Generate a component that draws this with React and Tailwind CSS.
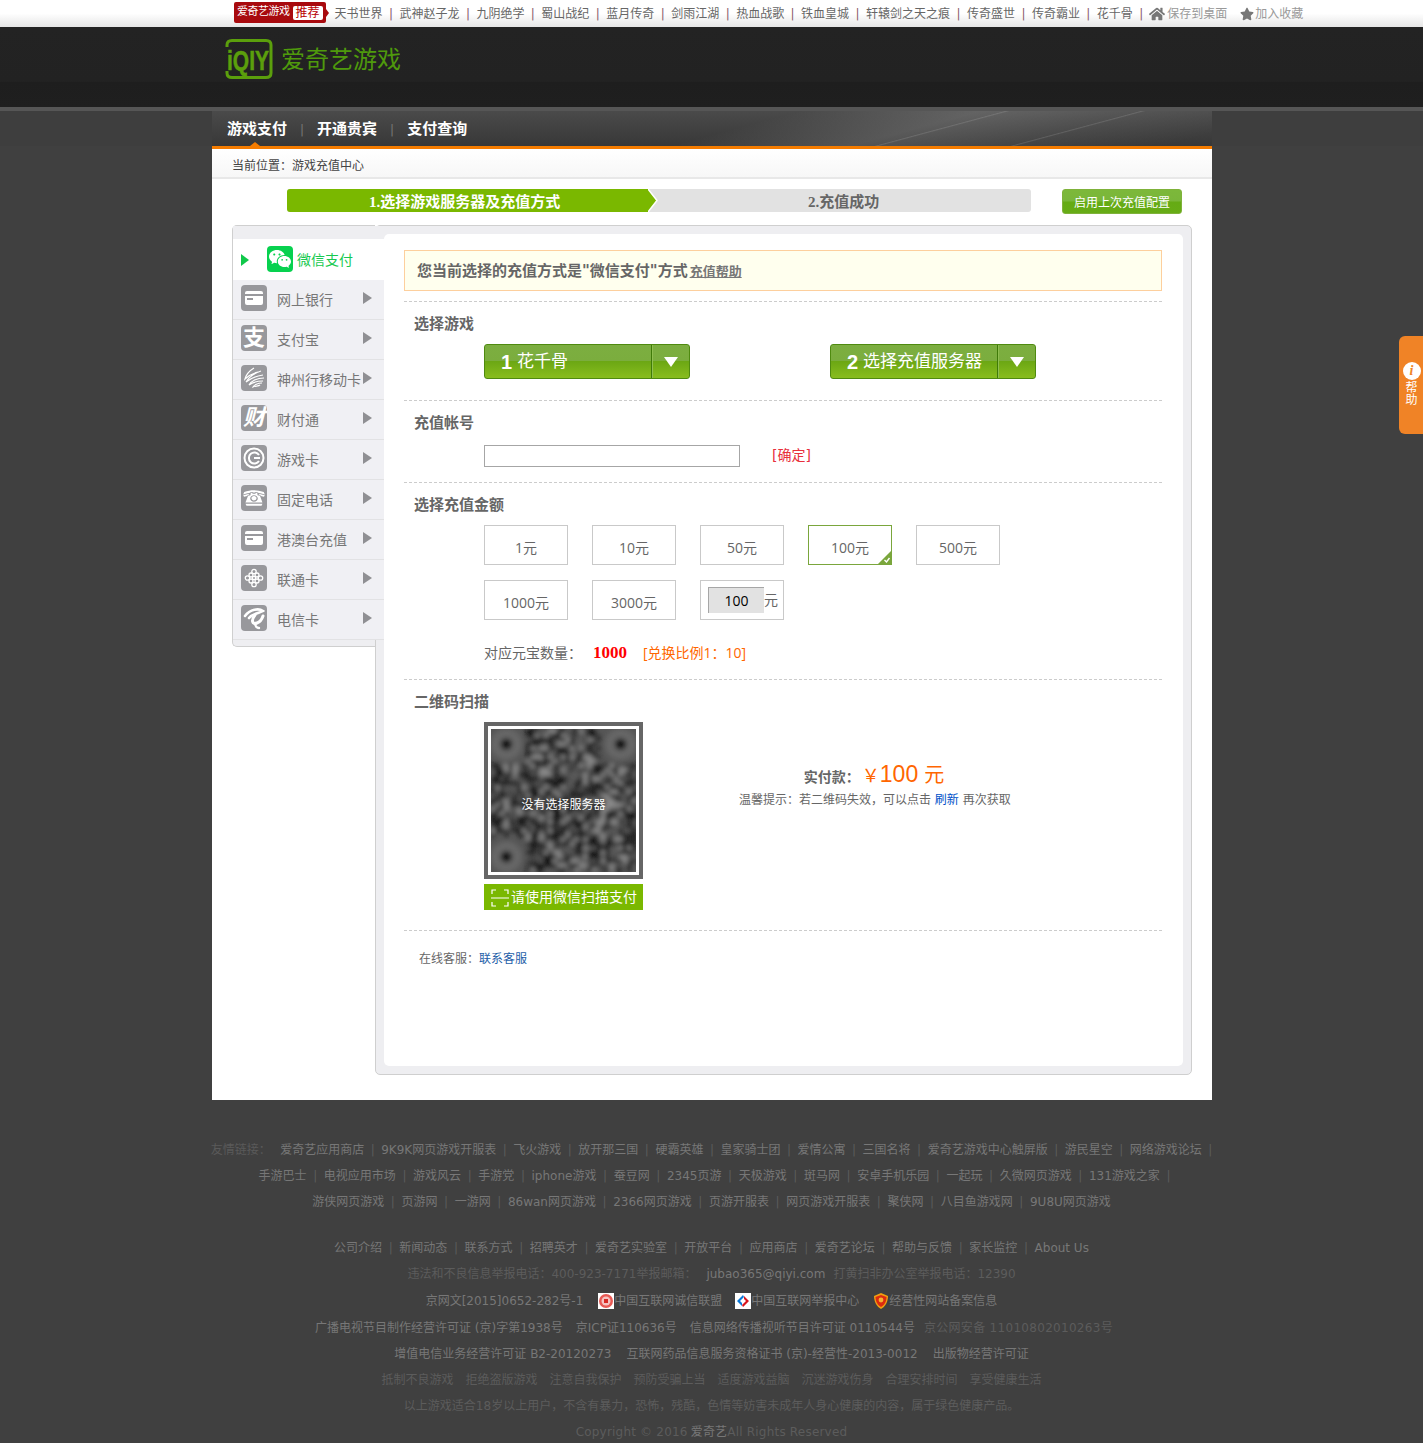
import { RiWechatFill } from "react-icons/ri";
import { GiRotaryPhone } from "react-icons/gi";
import { FaHome, FaStar } from "react-icons/fa";

const topLinks = ["天书世界", "武神赵子龙", "九阴绝学", "蜀山战纪", "蓝月传奇", "剑雨江湖", "热血战歌", "铁血皇城", "轩辕剑之天之痕", "传奇盛世", "传奇霸业", "花千骨"];
const friendRows = [
  ["爱奇艺应用商店", "9K9K网页游戏开服表", "飞火游戏", "放开那三国", "硬霸英雄", "皇家骑士团", "爱情公寓", "三国名将", "爱奇艺游戏中心触屏版", "游民星空", "网络游戏论坛"],
  ["手游巴士", "电视应用市场", "游戏风云", "手游党", "iphone游戏", "蚕豆网", "2345页游", "天极游戏", "斑马网", "安卓手机乐园", "一起玩", "久微网页游戏", "131游戏之家"],
  ["游侠网页游戏", "页游网", "一游网", "86wan网页游戏", "2366网页游戏", "页游开服表", "网页游戏开服表", "聚侠网", "八目鱼游戏网", "9U8U网页游戏"],
];
const aboutLinks = ["公司介绍", "新闻动态", "联系方式", "招聘英才", "爱奇艺实验室", "开放平台", "应用商店", "爱奇艺论坛", "帮助与反馈", "家长监控", "About Us"];

const CardIcon = () => (
  <svg viewBox="0 0 26 26" className="w-[26px] h-[26px]">
    <rect x="4" y="6" width="18" height="14" rx="2" fill="#fff" />
    <rect x="4" y="9" width="18" height="2" fill="#98989c" />
    <rect x="6" y="13" width="6" height="2" fill="#98989c" />
  </svg>
);
const MobileIcon = () => (
  <svg viewBox="0 0 26 26" className="w-[26px] h-[26px]" fill="none" stroke="#fff" strokeWidth="1.2">
    <path d="M13 3 C8 6 5 10 4 14 C8 10 13 8 17 7 M20 6 C14 8 8 12 5 17 C10 13 16 11 22 10 M23 13 C16 13 10 16 8 20 C12 17 18 16 22 16 M21 18 C17 18 13 20 12 22 C15 21 18 21 19 20" />
  </svg>
);
const GameIcon = () => (
  <svg viewBox="0 0 26 26" className="w-[26px] h-[26px]" fill="none" stroke="#fff" strokeWidth="2">
    <circle cx="13" cy="13" r="9.5" />
    <path d="M18 10 A5.5 5.5 0 1 0 18 16 M13 13 H19" />
  </svg>
);
const UnicomIcon = () => (
  <svg viewBox="0 0 26 26" className="w-[26px] h-[26px]" fill="none" stroke="#fff" strokeWidth="1.3">
    <circle cx="13" cy="6.5" r="2.2" />
    <circle cx="13" cy="19.5" r="2.2" />
    <circle cx="6.5" cy="13" r="2.2" />
    <circle cx="19.5" cy="13" r="2.2" />
    <circle cx="10" cy="10" r="2" />
    <circle cx="16" cy="10" r="2" />
    <circle cx="10" cy="16" r="2" />
    <circle cx="16" cy="16" r="2" />
    <circle cx="13" cy="13" r="1.6" />
  </svg>
);
const TelecomIcon = () => (
  <svg viewBox="0 0 26 26" className="w-[26px] h-[26px]" fill="none" stroke="#fff" strokeLinecap="round">
    <path d="M4 11 C9 4 18 3 22 6 C19 8 12 8 8 13" strokeWidth="2.6" />
    <path d="M14 10 C10 15 11 20 16 18 C19 17 21 14 22 11" strokeWidth="3" />
    <path d="M14 18 C14 21 16 23 18 23" strokeWidth="2.4" />
  </svg>
);
const GlyphIcon = ({ children, italic }) => (
  <span className={`text-white text-[22px] font-bold leading-none ${italic ? "italic" : ""}`}>{children}</span>
);

const payMethods = [
  { name: "网上银行", icon: <CardIcon /> },
  { name: "支付宝", icon: <GlyphIcon>支</GlyphIcon> },
  { name: "神州行移动卡", icon: <MobileIcon /> },
  { name: "财付通", icon: <GlyphIcon italic>财</GlyphIcon> },
  { name: "游戏卡", icon: <GameIcon /> },
  { name: "固定电话", icon: <GiRotaryPhone className="text-white w-[24px] h-[24px]" /> },
  { name: "港澳台充值", icon: <CardIcon /> },
  { name: "联通卡", icon: <UnicomIcon /> },
  { name: "电信卡", icon: <TelecomIcon /> },
];

// deterministic noise for the blurred qr image
const qrCells = [];
let seed = 29;
for (let y = 0; y < 33; y++) {
  for (let x = 0; x < 33; x++) {
    seed = (seed * 1103515245 + 12345) % 2147483648;
    const inFinder = (x < 8 && y < 8) || (x > 24 && y < 8) || (x < 8 && y > 24);
    if (!inFinder) qrCells.push({ x, y, v: (seed >> 14) % 5 });
  }
}
const qrColor = (v) => (v < 2 ? "#101010" : v === 2 ? "#8f8f8f" : v === 3 ? "#3c3c3c" : "#5a5a5a");

const BlurredQr = () => (
  <svg viewBox="0 0 33 33" preserveAspectRatio="none" className="w-full h-full block">
    <defs>
      <filter id="qrBlur" x="-5%" y="-5%" width="110%" height="110%">
        <feGaussianBlur stdDeviation="0.6" />
      </filter>
    </defs>
    <rect width="33" height="33" fill="#555" />
    <g filter="url(#qrBlur)">
      {qrCells.map((c) => (
        <rect key={c.x + "-" + c.y} x={c.x} y={c.y} width="1" height="1" fill={qrColor(c.v)} />
      ))}
      {[[3.5, 3.5], [29.5, 3.5], [3.5, 29.5]].map(([cx, cy]) => (
        <g key={cx + "" + cy}>
          <circle cx={cx} cy={cy} r="3.6" fill="#666" />
          <circle cx={cx} cy={cy} r="1.3" fill="#0a0a0a" />
        </g>
      ))}
    </g>
  </svg>
);

const Logo = () => (
  <svg viewBox="0 0 48 40" className="w-[48px] h-[40px]">
    <path d="M2 8 V6 Q2 1.5 7 1.5 H41 Q46 1.5 46 6 V34 Q46 38.5 41 38.5 H7 Q2 38.5 2 34 V32" fill="none" stroke="#5b9f0c" strokeWidth="3" />
    <text x="23" y="22.6" transform="scale(1 1.35)" textAnchor="middle" fontSize="21" fontWeight="700" fill="#5b9f0c" stroke="#5b9f0c" strokeWidth="0.4" fontFamily="Liberation Sans, sans-serif">iQIY</text>
  </svg>
);

const Sep = ({ className = "text-[#5c5c5c]" }) => <span className={className}>|</span>;

const SelectButton = ({ num, label }) => (
  <div className="w-[206px] h-[35px] flex rounded-[3px] border border-[#4f8a10] bg-[linear-gradient(#7cae40_0%,#7bad3e_48%,#6ca714_50%,#88bd1e_100%)] text-white">
    <div className="w-[167px] flex items-center pl-[16px] pt-[1px] border-r border-[#3f7a08]">
      <span className="text-[20px] font-bold w-[16px] [font-family:'Liberation_Sans',sans-serif]">{num}</span>
      <span className="text-[17px] whitespace-nowrap">{label}</span>
    </div>
    <div className="flex-1 flex items-center justify-center border-l border-[#8fbf50]">
      <div className="w-0 h-0 border-x-[7px] border-x-transparent border-t-[10px] border-t-white" />
    </div>
  </div>
);

const AmountBox = ({ label, selected }) => (
  <div className={`relative w-[84px] h-[40px] border flex items-center justify-center pt-[4px] text-[14px] text-[#666] [font-family:'Open_Sans','Noto_Sans_CJK_SC',sans-serif] ${selected ? "border-[#7aa63c]" : "border-[#c9c9c9]"}`}>
    {label}
    {selected && (
      <svg viewBox="0 0 13 13" className="absolute right-0 bottom-0 w-[13px] h-[13px]">
        <path d="M13 0 V13 H0 Z" fill="#7aa63c" />
        <path d="M6.5 9 L8.5 11 L11.5 7" fill="none" stroke="#fff" strokeWidth="1.4" />
      </svg>
    )}
  </div>
);

const SectionTitle = ({ children }) => <div className="ml-[10px] h-[16px] leading-[16px] text-[15px] font-bold text-[#666]">{children}</div>;

const LinkRow = ({ items, trailing, className = "" }) => (
  <div className={`h-[26px] flex items-center justify-center gap-[6.6px] text-[#777] ${className}`}>
    {items.map((item, i) => (
      <span key={item} className="flex items-center gap-[6.6px]">
        {item}
        {(i < items.length - 1 || trailing) && <Sep />}
      </span>
    ))}
  </div>
);

const App = () => {
  return (
    <div className="relative w-full min-h-[1443px] bg-[#404040] text-[12px] overflow-hidden [font-family:'DejaVu_Sans','Noto_Sans_CJK_SC',sans-serif]">
      {/* top bar */}
      <div className="h-[27px] bg-[linear-gradient(#ffffff,#ffffff_50%,#e6e6e6)]">
        <div className="flex items-center h-[27px] pl-[234px] text-[#666]">
          <div className="relative flex items-center w-[92px] h-[21px] -mt-[2px] bg-[#a80a0e] rounded-[2px] text-white pl-[3px] text-[11px] tracking-[-0.5px]">
            爱奇艺游戏
            <span className="ml-[3px] px-[3px] bg-white text-[#b80000] rounded-[2px] leading-[14px] text-[12px] tracking-normal whitespace-nowrap">推荐</span>
            <span className="absolute -right-[3px] top-[7px] w-0 h-0 border-y-[4px] border-y-transparent border-l-[3px] border-l-[#a80a0e]" />
          </div>
          <div className="flex items-center gap-[6.45px] ml-[8.5px] pt-[1px]">
            {topLinks.map((name) => (
              <span key={name} className="flex items-center gap-[6.45px]">
                {name}
                <Sep className="text-[#8a5a6a]" />
              </span>
            ))}
          </div>
          <FaHome className="ml-[6px] w-[16px] h-[16px] text-[#777]" />
          <span className="ml-[2px] pt-[1px] text-[#999]">保存到桌面</span>
          <FaStar className="ml-[13px] w-[14px] h-[14px] text-[#777]" />
          <span className="ml-[1px] pt-[1px] text-[#999]">加入收藏</span>
        </div>
      </div>

      {/* logo header */}
      <div className="h-[80px] bg-[linear-gradient(#232323,#222222_68%,#1e1e1e_69%,#1f1f1f)] pl-[225px] pt-[12px] flex items-start">
        <Logo />
        <span className="ml-[8px] mt-[4px] text-[24px] leading-[34px] text-[#4f9a0c]">爱奇艺游戏</span>
      </div>

      {/* nav */}
      <div className="h-[39px] border-t-[4px] border-[#565656] bg-[#3e3e3e]">
        <div className="relative ml-[212px] w-[1000px] h-[35px] pl-[15px] pt-[2px] flex items-center gap-[13px] text-[15px] font-bold text-white bg-[linear-gradient(165deg,transparent_70%,rgba(255,255,255,0.12)_70.3%,transparent_70.7%,transparent_82%,rgba(255,255,255,0.12)_82.3%,transparent_82.7%),linear-gradient(165deg,transparent_52%,rgba(255,255,255,0.14)_68%,rgba(255,255,255,0.05)_84%,transparent_96%),linear-gradient(#4a4a4a,#383838)]">
          <span>游戏支付</span>
          <span className="text-[#777] font-normal text-[12px]">|</span>
          <span>开通贵宾</span>
          <span className="text-[#777] font-normal text-[12px]">|</span>
          <span>支付查询</span>
          <span className="absolute left-[38px] bottom-0 w-0 h-0 border-x-[5px] border-x-transparent border-b-[4px] border-b-[#f57c00]" />
        </div>
      </div>

      {/* page */}
      <div className="ml-[212px] w-[1000px] h-[954px] bg-white border-t-[3px] border-[#f57c00]">
        <div className="h-[30px] pl-[20px] pt-[5px] flex items-center text-[12px] text-[#444] border-b-2 border-[#e8e8e8] bg-[linear-gradient(#ffffff,#f7f7f7)]">当前位置：游戏充值中心</div>

        {/* steps */}
        <div className="flex items-start mt-[10px] pl-[75px]">
          <div className="relative w-[744px] h-[23px] rounded-[3px] bg-[#e2e2e2] flex text-[15px] font-bold [font-family:'Liberation_Serif','Noto_Sans_CJK_SC',serif]">
            <div className="relative w-[361px] rounded-l-[3px] bg-[#7ab800] text-white flex items-center pl-[82px] pt-[3px]">
              1.选择游戏服务器及充值方式
              <svg viewBox="0 0 11 23" className="absolute -right-[11px] top-0 w-[11px] h-[23px]">
                <path d="M0 0 L9 11.5 L0 23 Z" fill="#7ab800" />
                <path d="M0 0 L9 11.5 L0 23" fill="none" stroke="#fff" strokeWidth="1.5" />
              </svg>
            </div>
            <div className="text-[#666] flex items-center pl-[160px] pt-[3px]">2.充值成功</div>
          </div>
          <div className="ml-[31px] w-[120px] h-[25px] pt-[3px] rounded-[3px] border border-[#7fb23a] bg-[linear-gradient(#7cb83a_0%,#7ab63a_48%,#65ab14_52%,#67ac16_100%)] text-white flex items-center justify-center">启用上次充值配置</div>
        </div>

        {/* payment panel */}
        <div className="flex items-start mt-[11px] ml-[20px] w-[960px]">
          <div className="relative z-10 w-[143px] h-[422px] border border-r-0 border-[#cfcfcf] rounded-l-[5px] bg-[#eeeef1]">
            <div className="w-[151px] h-[13px] bg-[#eeeef1]" />
            <div className="w-[151px] h-[41px] bg-white flex items-center text-[14px] text-[#17c950]">
              <div className="ml-[8px] w-0 h-0 border-y-[6px] border-y-transparent border-l-[8px] border-l-[#10c84a]" />
              <div className="ml-[18px] -mt-[2px] w-[26px] h-[26px] rounded-[4px] bg-[#07d14f] flex items-center justify-center">
                <RiWechatFill className="text-white w-[24px] h-[24px]" />
              </div>
              <span className="ml-[4px] pt-[2px]">微信支付</span>
            </div>
            {payMethods.map((m) => (
              <div key={m.name} className="relative w-[151px] h-[40px] flex items-center bg-[#f0f0f4] border-b border-[#e2e2e4] text-[14px] text-[#777]">
                <div className="ml-[8px] -mt-[3px] w-[26px] h-[26px] rounded-[4px] bg-[#98989c] flex items-center justify-center shrink-0 overflow-hidden">{m.icon}</div>
                <span className="ml-[10px] pt-[2px] whitespace-nowrap">{m.name}</span>
                <div className="absolute left-[130px] top-[12px] w-0 h-0 border-y-[6px] border-y-transparent border-l-[9px] border-l-[#8f8f93]" />
              </div>
            ))}
          </div>

          <div className="w-[817px] h-[850px] border border-[#cfcfcf] rounded-[5px] bg-[#eeeef1] p-[8px]">
            <div className="w-[799px] h-[832px] bg-white rounded-[5px] pt-[16px] pl-[20px] pr-[21px]">
              <div className="h-[41px] border border-[#fdcf9d] bg-[#ffffee] pl-[12px] pt-[1px] flex items-center text-[15px] font-bold text-[#666]">
                您当前选择的充值方式是"微信支付"方式
                <a className="ml-[2px] pt-[2px] text-[13px] underline text-[#777]">充值帮助</a>
              </div>
              <div className="mt-[10px] border-t border-dashed border-[#ccc]" />

              <div className="h-[99px] pt-[14px] border-b border-dashed border-[#ccc]">
                <SectionTitle>选择游戏</SectionTitle>
                <div className="flex mt-[12px] ml-[80px] gap-[140px]">
                  <SelectButton num="1" label="花千骨" />
                  <SelectButton num="2" label="选择充值服务器" />
                </div>
              </div>

              <div className="h-[82px] pt-[14px] border-b border-dashed border-[#ccc]">
                <SectionTitle>充值帐号</SectionTitle>
                <div className="flex items-center mt-[14px] ml-[80px]">
                  <input className="w-[256px] h-[22px] border border-[#a6a6a6] bg-white" />
                  <span className="ml-[32px] text-[14px] text-[#e8303c] -mt-[1px]">[确定]</span>
                </div>
              </div>

              <div className="h-[197px] pt-[14px] border-b border-dashed border-[#ccc]">
                <SectionTitle>选择充值金额</SectionTitle>
                <div className="mt-[12px] ml-[80px] flex gap-[24px]">
                  <AmountBox label="1元" />
                  <AmountBox label="10元" />
                  <AmountBox label="50元" />
                  <AmountBox label="100元" selected />
                  <AmountBox label="500元" />
                </div>
                <div className="mt-[15px] ml-[80px] flex gap-[24px]">
                  <AmountBox label="1000元" />
                  <AmountBox label="3000元" />
                  <div className="w-[84px] h-[40px] border border-[#c9c9c9] pl-[7px] flex items-center text-[14px] text-[#666]">
                    <div className="w-[56px] h-[26px] bg-[#e2e2e2] border-t border-l border-[#a6a6a6] flex items-center justify-center text-black [font-family:'Open_Sans',sans-serif]">100</div>
                    元
                  </div>
                </div>
                <div className="mt-[23px] ml-[80px] flex items-center h-[20px] text-[14px] text-[#666]">
                  <span className="w-[109px]">对应元宝数量：</span>
                  <span className="w-[50px] text-[17px] font-bold text-[#f00] -mt-[1px] [font-family:'Liberation_Serif',serif]">1000</span>
                  <span className="text-[#ff6600] -mt-[1px] [font-family:'Open_Sans','Noto_Sans_CJK_SC',sans-serif]">[兑换比例1：10]</span>
                </div>
              </div>

              <div className="h-[251px] pt-[14px] border-b border-dashed border-[#ccc]">
                <SectionTitle>二维码扫描</SectionTitle>
                <div className="flex mt-[12px] ml-[80px]">
                  <div className="w-[159px]">
                    <div className="relative h-[157px] border-[4px] border-[#666] p-[3px] bg-white">
                      <BlurredQr />
                      <span className="absolute inset-0 flex items-center justify-center text-white pt-[8px]">没有选择服务器</span>
                    </div>
                    <div className="mt-[5px] h-[26px] bg-[#7ab800] text-white text-[14px] flex items-center pl-[7px] pt-[1px] gap-[2px] whitespace-nowrap">
                      <svg viewBox="0 0 18 18" className="w-[18px] h-[18px]" fill="none" stroke="#fff" strokeWidth="1.2">
                        <path d="M1 5 V1 H5 M13 1 H17 V5 M1 13 V17 H5 M13 17 H17 V13 M0 9 H18" />
                      </svg>
                      请使用微信扫描支付
                    </div>
                  </div>
                  <div className="ml-[96px] w-[270px] pt-[35px] text-center text-[#666]">
                    <div className="flex items-baseline justify-center h-[30px] text-[#ff6600] [font-family:'Liberation_Sans','Noto_Sans_CJK_SC',sans-serif]">
                      <span className="text-[14px] font-bold text-[#666] [font-family:'DejaVu_Sans','Noto_Sans_CJK_SC',sans-serif]">实付款：</span>
                      <span className="text-[18px] ml-[2px]">￥</span>
                      <span className="text-[23px]">100</span>
                      <span className="text-[20px] ml-[6px]">元</span>
                    </div>
                    <div className="mt-[4px] whitespace-nowrap">温馨提示：若二维码失效，可以点击 <a className="text-[#0050c8]">刷新</a> 再次获取</div>
                  </div>
                </div>
              </div>

              <div className="mt-[20px] ml-[15px] h-[16px] leading-[16px] text-[#666]">
                在线客服：<a className="text-[#1e5ea8]">联系客服</a>
              </div>
            </div>
          </div>
        </div>
      </div>

      {/* footer */}
      <div className="mt-[37px] text-center text-[#777]">
        <div className="h-[26px] flex items-center justify-center gap-[6.5px]">
          <span className="text-[#5a5a5a] mr-[3px]">友情链接：</span>
          {friendRows[0].map((item) => (
            <span key={item} className="flex items-center gap-[6.5px]">
              {item}
              <Sep />
            </span>
          ))}
        </div>
        <LinkRow items={friendRows[1]} trailing className="pl-[6px]" />
        <LinkRow items={friendRows[2]} />
        <div className="h-[20px]" />
        <LinkRow items={aboutLinks} />
        <div className="h-[26px] flex items-center justify-center text-[#5c5c5c]">
          违法和不良信息举报电话：400-923-7171举报邮箱：
          <span className="ml-[10px] text-[#777]">jubao365@qiyi.com</span>
          <span className="ml-[8px]">打黄扫非办公室举报电话：12390</span>
        </div>
        <div className="h-[28px] flex items-center justify-center">
          <span>京网文[2015]0652-282号-1</span>
          <svg viewBox="0 0 16 16" className="ml-[15px] w-[16px] h-[16px]">
            <rect width="16" height="16" fill="#fff" />
            <circle cx="8" cy="8" r="7" fill="#e85a55" />
            <circle cx="8" cy="8" r="4.5" fill="#f7c4c2" />
            <rect x="6" y="6" width="4" height="4" fill="#d92b26" />
          </svg>
          <span>中国互联网诚信联盟</span>
          <svg viewBox="0 0 16 16" className="ml-[13px] w-[16px] h-[16px]">
            <rect width="16" height="16" fill="#fff" />
            <path d="M8 2 L2 8 L7 13 L7 10 L5 8 L9 4 Z" fill="#0a78d8" />
            <path d="M8 14 L14 8 L9 3 L9 6 L11 8 L7 12 Z" fill="#d8141c" />
          </svg>
          <span>中国互联网举报中心</span>
          <svg viewBox="0 0 16 16" className="ml-[14px] w-[16px] h-[16px]">
            <path d="M8 0 L15 3 C15 9 12 14 8 16 C4 14 1 9 1 3 Z" fill="#f0a010" />
            <path d="M8 2 L13.5 4 C13.5 9 11 12.5 8 14 C5 12.5 2.5 9 2.5 4 Z" fill="#dc2a10" />
            <circle cx="8" cy="7" r="2.4" fill="#f5b030" />
          </svg>
          <span>经营性网站备案信息</span>
        </div>
        <div className="h-[26px] flex items-center justify-center gap-[13px] pl-[5px]">
          <span>广播电视节目制作经营许可证 (京)字第1938号</span>
          <span>京ICP证110636号</span>
          <span>信息网络传播视听节目许可证 0110544号</span>
          <span className="-ml-[4px] text-[#5c5c5c] tracking-[0.3px]">京公网安备 11010802010263号</span>
        </div>
        <div className="h-[26px] flex items-center justify-center gap-[15px]">
          <span>增值电信业务经营许可证 B2-20120273</span>
          <span>互联网药品信息服务资格证书 (京)-经营性-2013-0012</span>
          <span>出版物经营许可证</span>
        </div>
        <div className="h-[26px] flex items-center justify-center gap-[12px] text-[#5c5c5c]">
          {["抵制不良游戏", "拒绝盗版游戏", "注意自我保护", "预防受骗上当", "适度游戏益脑", "沉迷游戏伤身", "合理安排时间", "享受健康生活"].map((t) => (
            <span key={t}>{t}</span>
          ))}
        </div>
        <div className="h-[26px] flex items-center justify-center text-[#5c5c5c]">以上游戏适合18岁以上用户，不含有暴力，恐怖，残酷，色情等妨害未成年人身心健康的内容，属于绿色健康产品。</div>
        <div className="h-[25px] flex items-center justify-center text-[#5c5c5c] tracking-[0.2px]">
          Copyright © 2016 <span className="ml-[3px] text-[#777]">爱奇艺</span>All Rights Reserved
        </div>
      </div>

      {/* help tab */}
      <div className="absolute right-0 top-[336px] w-[24px] h-[98px] rounded-l-[6px] bg-[#f08326] flex flex-col items-center pt-[26px] pl-[1px] text-white leading-[12px]">
        <div className="w-[18px] h-[18px] rounded-full bg-white flex items-center justify-center text-[#f08326] text-[14px] font-bold italic [font-family:'Liberation_Serif',serif]">i</div>
        <span className="mt-[2px]">帮</span>
        <span>助</span>
      </div>
    </div>
  );
};

export default App;
